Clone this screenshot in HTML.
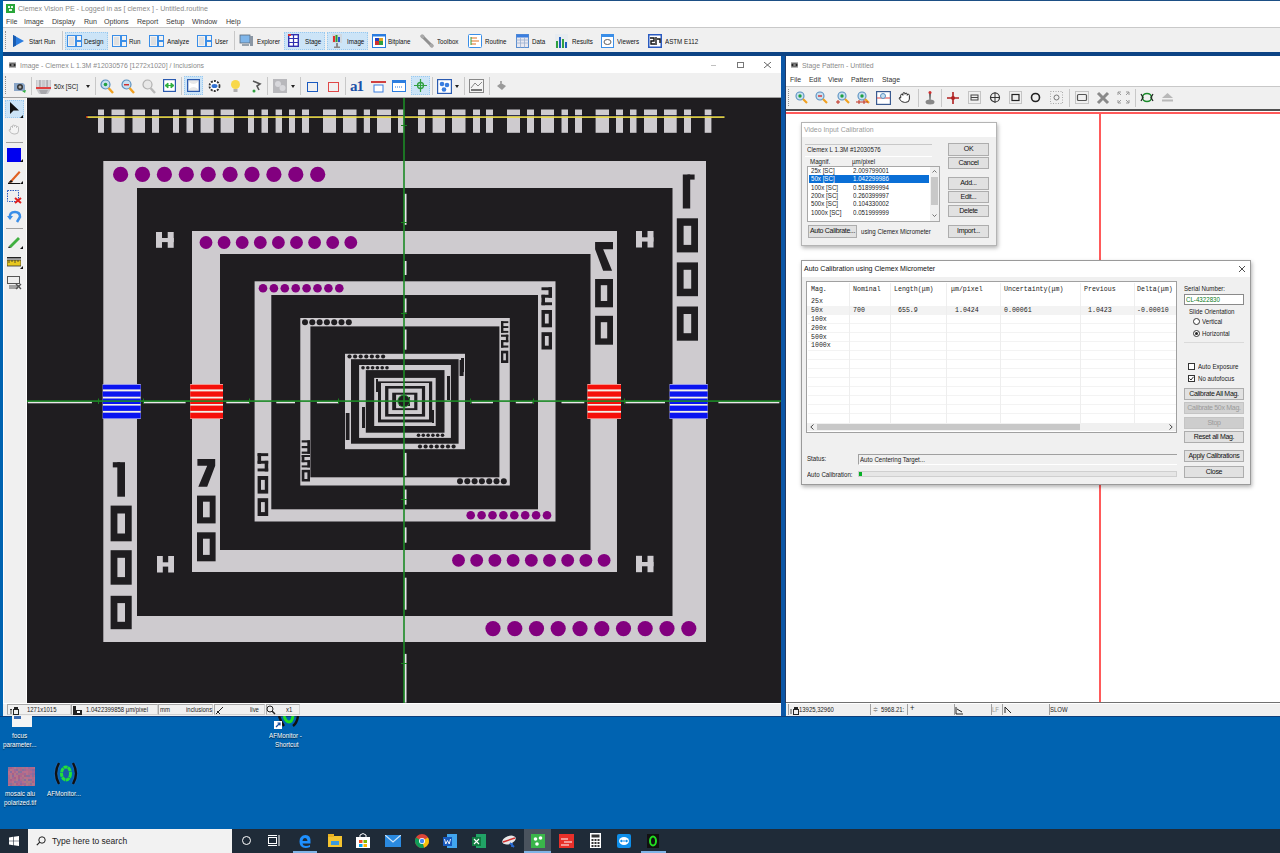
<!DOCTYPE html>
<html><head><meta charset="utf-8">
<style>
*{margin:0;padding:0;box-sizing:border-box}
html,body{width:1280px;height:853px;overflow:hidden;background:#0063b1;font-family:"Liberation Sans",sans-serif;font-size:8px;color:#000}
.a{position:absolute}
.t{position:absolute;white-space:nowrap;line-height:10px}
#desk{left:0;top:0;width:1280px;height:853px;background:#0063b1}
#main{left:0;top:0;width:1280px;height:56px;background:#fff;border-top:1px solid #1d4f85}
#lb{left:0;top:0;width:3px;height:717px;background:#0063b1}
#band{left:3px;top:52px;width:1277px;height:4px;background:#0c4384}
.sep{position:absolute;width:1px;background:#c8c8c8}
.tb{font-size:7.5px;color:#111;transform:scaleX(.83);transform-origin:0 0}
.st{font-size:7px;color:#222;transform:scaleX(.85);transform-origin:0 0;line-height:9px}
.sf{height:11px;border:1px solid #d0d0d0;border-top-color:#a8a8a8;border-left-color:#a8a8a8;background:#f0f0f0}
.sm{font-size:6.9px;color:#333}
.sf2{height:11px;border-left:1px solid #a0a0a0;background:#f0f0f0}
.dt{font-size:7px;color:#1a1a1a;transform:scaleX(.88);transform-origin:0 0;line-height:9px}
.btn{position:absolute;background:#e1e1e1;border:1px solid #adadad;font-size:7px;color:#111;text-align:center;line-height:10px;white-space:nowrap;overflow:hidden;letter-spacing:-0.3px}
.mo{font-family:"Liberation Mono",monospace;font-size:6.6px;color:#222;line-height:9px}
.dk{font-size:7px;color:#fff;line-height:9px;text-shadow:0 1px 1px rgba(0,0,0,.7);transform:scaleX(.9);transform-origin:0 0}
.hl{position:absolute;background:#cce4f7;border:1px dotted #99c9ef}
</style></head><body>
<div class="a" id="desk"></div>

<!-- main app window -->
<div class="a" id="main"></div>
<div class="a" style="left:0;top:27px;width:1280px;height:1px;background:#c9c9c9"></div>
<div class="a" style="left:0;top:28px;width:1280px;height:24px;background:#f0f0f0"></div>
<div class="a" id="band"></div>
<div class="a" id="lb"></div>


<!-- main title -->
<svg class="a" style="left:6px;top:4px" width="9" height="9" viewBox="0 0 9 9"><rect width="9" height="9" fill="#2aa63a"/><rect x="2" y="2" width="2" height="2" fill="#e8f8e8"/><rect x="5" y="2" width="2" height="2" fill="#e8f8e8"/><rect x="3" y="5" width="3" height="2" fill="#e8f8e8"/></svg>
<div class="t" style="left:18px;top:4px;font-size:7.1px;color:#8a8a8a" id="ttl">Clemex Vision PE - Logged in as [ clemex ] - Untitled.routine</div>
<div class="t" style="left:6px;top:17px;font-size:7.1px;color:#3a3a3a" id="m1">File</div>
<div class="t" style="left:24px;top:17px;font-size:7.1px;color:#3a3a3a">Image</div>
<div class="t" style="left:52px;top:17px;font-size:7.1px;color:#3a3a3a">Display</div>
<div class="t" style="left:84px;top:17px;font-size:7.1px;color:#3a3a3a">Run</div>
<div class="t" style="left:104px;top:17px;font-size:7.1px;color:#3a3a3a">Options</div>
<div class="t" style="left:137px;top:17px;font-size:7.1px;color:#3a3a3a">Report</div>
<div class="t" style="left:166px;top:17px;font-size:7.1px;color:#3a3a3a">Setup</div>
<div class="t" style="left:192px;top:17px;font-size:7.1px;color:#3a3a3a">Window</div>
<div class="t" style="left:226px;top:17px;font-size:7.1px;color:#3a3a3a">Help</div>
<!-- main toolbar -->
<div class="a" style="left:5px;top:31px;width:1px;height:18px;border-left:1px dotted #909090"></div>
<div class="hl" style="left:65px;top:32px;width:43px;height:18px"></div>
<div class="hl" style="left:284px;top:32px;width:41px;height:18px"></div>
<div class="hl" style="left:327px;top:32px;width:41px;height:18px"></div>
<div class="sep" style="left:62px;top:31px;height:19px"></div>
<div class="sep" style="left:234px;top:31px;height:19px"></div>
<svg class="a" style="left:12px;top:34px" width="13" height="14" viewBox="0 0 13 14"><path d="M1 1L12 7L1 13Z" fill="#2a7de0"/><path d="M1 1L4 2.5V11.5L1 13Z" fill="#1a5cb0"/></svg>
<div class="t tb" style="left:29px;top:37px">Start Run</div>
<svg class="a ic-l" style="left:67px;top:35px" width="15" height="12" viewBox="0 0 15 12"><rect x="0.5" y="0.5" width="8" height="11" fill="#f2f2f2" stroke="#3a8ee8"/><rect x="2" y="2" width="5" height="8" fill="#e0e0e0"/><rect x="9.5" y="0.5" width="5" height="5" fill="#f2f2f2" stroke="#3a8ee8"/><rect x="9.5" y="6.5" width="5" height="5" fill="#f2f2f2" stroke="#3a8ee8"/></svg>
<div class="t tb" style="left:84px;top:37px">Design</div>
<svg class="a" style="left:112px;top:35px" width="15" height="12" viewBox="0 0 15 12"><rect x="0.5" y="0.5" width="8" height="11" fill="#f2f2f2" stroke="#3a8ee8"/><rect x="2" y="2" width="5" height="8" fill="#e0e0e0"/><rect x="9.5" y="0.5" width="5" height="5" fill="#f2f2f2" stroke="#3a8ee8"/><rect x="9.5" y="6.5" width="5" height="5" fill="#f2f2f2" stroke="#3a8ee8"/></svg>
<div class="t tb" style="left:129px;top:37px">Run</div>
<svg class="a" style="left:149px;top:35px" width="15" height="12" viewBox="0 0 15 12"><rect x="0.5" y="0.5" width="8" height="11" fill="#f2f2f2" stroke="#3a8ee8"/><rect x="2" y="2" width="5" height="8" fill="#e0e0e0"/><rect x="9.5" y="0.5" width="5" height="5" fill="#f2f2f2" stroke="#3a8ee8"/><rect x="9.5" y="6.5" width="5" height="5" fill="#f2f2f2" stroke="#3a8ee8"/></svg>
<div class="t tb" style="left:167px;top:37px">Analyze</div>
<svg class="a" style="left:197px;top:35px" width="15" height="12" viewBox="0 0 15 12"><rect x="0.5" y="0.5" width="8" height="11" fill="#f2f2f2" stroke="#3a8ee8"/><rect x="2" y="2" width="5" height="8" fill="#e0e0e0"/><rect x="9.5" y="0.5" width="5" height="5" fill="#f2f2f2" stroke="#3a8ee8"/><rect x="9.5" y="6.5" width="5" height="5" fill="#f2f2f2" stroke="#3a8ee8"/></svg>
<div class="t tb" style="left:215px;top:37px">User</div>
<svg class="a" style="left:239px;top:34px" width="15" height="14" viewBox="0 0 15 14"><rect x="1" y="1" width="10" height="8" fill="#7fb6ea" stroke="#5a6a7a" stroke-width="0.8"/><rect x="11" y="2" width="3" height="10" fill="#8a96a4"/><rect x="3" y="10" width="7" height="2" fill="#9aa4ae"/></svg>
<div class="t tb" style="left:257px;top:37px">Explorer</div>
<svg class="a" style="left:288px;top:34px" width="11" height="13" viewBox="0 0 11 13"><rect x="0.7" y="0.7" width="9.6" height="11.6" fill="#fff" stroke="#3030b0" stroke-width="1.4"/><path d="M0.7 4.5H10.3M0.7 8.5H10.3M5.5 0.7V12.3" stroke="#3030b0" stroke-width="1.2"/><rect x="0" y="0" width="3" height="2" fill="#e03030"/></svg>
<div class="t tb" style="left:305px;top:37px">Stage</div>
<svg class="a" style="left:331px;top:34px" width="12" height="14" viewBox="0 0 12 14"><rect x="1" y="0" width="10" height="9" fill="#d0d8e0"/><rect x="2" y="2" width="2" height="6" fill="#e03030"/><rect x="4.5" y="1" width="2" height="7" fill="#30a030"/><rect x="7" y="3" width="2" height="5" fill="#3050d0"/><rect x="5" y="9" width="2" height="4" fill="#888"/><rect x="3" y="12.5" width="6" height="1.5" fill="#888"/></svg>
<div class="t tb" style="left:347px;top:37px">Image</div>
<svg class="a" style="left:372px;top:34px" width="14" height="14" viewBox="0 0 14 14"><rect x="0.5" y="0.5" width="13" height="13" fill="#fff" stroke="#2a7de0"/><rect x="3" y="4" width="8" height="7" fill="#e0a020"/><rect x="3" y="4" width="4" height="3" fill="#2040c0"/><rect x="7" y="7" width="4" height="4" fill="#30a040"/><rect x="3" y="7" width="4" height="4" fill="#d03030"/><rect x="0.5" y="0.5" width="13" height="2" fill="#2a7de0"/></svg>
<div class="t tb" style="left:388px;top:37px">Bitplane</div>
<svg class="a" style="left:420px;top:34px" width="14" height="14" viewBox="0 0 14 14"><path d="M2 2L12 12" stroke="#909090" stroke-width="3" stroke-linecap="round"/><circle cx="2.5" cy="2.5" r="2" fill="#a8a8a8"/><circle cx="11.5" cy="11.5" r="2" fill="#a8a8a8"/></svg>
<div class="t tb" style="left:437px;top:37px">Toolbox</div>
<svg class="a" style="left:468px;top:34px" width="14" height="14" viewBox="0 0 14 14"><rect x="0.5" y="0.5" width="13" height="13" rx="1" fill="#fff" stroke="#3a8ee8"/><path d="M3 4H9M3 7H11M3 10H8" stroke="#e07020" stroke-width="1.2"/><path d="M3 3V11" stroke="#30a040"/></svg>
<div class="t tb" style="left:485px;top:37px">Routine</div>
<svg class="a" style="left:516px;top:34px" width="13" height="14" viewBox="0 0 13 14"><rect x="0.5" y="0.5" width="12" height="13" fill="#e8e8f0" stroke="#5a8ed0"/><rect x="0.5" y="0.5" width="12" height="3" fill="#3a7ee0"/><path d="M0.5 6H12.5M0.5 9H12.5M4.5 3V13.5M8.5 3V13.5" stroke="#9ab0d0" stroke-width="0.8"/></svg>
<div class="t tb" style="left:532px;top:37px">Data</div>
<svg class="a" style="left:555px;top:34px" width="13" height="14" viewBox="0 0 13 14"><rect x="0" y="0" width="13" height="14" fill="#e8ecf0"/><rect x="1" y="7" width="2" height="7" fill="#30a040"/><rect x="4" y="3" width="2" height="11" fill="#2060c0"/><rect x="7" y="5" width="2" height="9" fill="#30a040"/><rect x="10" y="8" width="2" height="6" fill="#2060c0"/></svg>
<div class="t tb" style="left:572px;top:37px">Results</div>
<svg class="a" style="left:601px;top:34px" width="13" height="14" viewBox="0 0 13 14"><rect x="0.5" y="0.5" width="12" height="13" fill="#fff" stroke="#3a8ee8"/><rect x="0.5" y="0.5" width="12" height="2.5" fill="#3a8ee8"/><ellipse cx="6.5" cy="8" rx="3.5" ry="2.5" fill="none" stroke="#606060"/></svg>
<div class="t tb" style="left:617px;top:37px">Viewers</div>
<svg class="a" style="left:648px;top:34px" width="14" height="14" viewBox="0 0 14 14"><rect x="0" y="0" width="14" height="14" fill="#2a5ac0"/><rect x="1.5" y="1.5" width="11" height="11" fill="#fff"/><path d="M2 4H6V7H3V10H7M8 3V11M9 5H12V9" stroke="#111" stroke-width="1.4" fill="none"/></svg>
<div class="t tb" style="left:665px;top:37px">ASTM E112</div>

<!-- image window -->
<div class="a" id="imgwin" style="left:3px;top:56px;width:778px;height:661px;background:#fff"></div>
<div class="a" style="left:3px;top:73px;width:778px;height:24px;background:#f0f0f0"></div>
<div class="a" style="left:3px;top:97px;width:778px;height:1px;background:#a0a0a0"></div>
<div class="a" style="left:4px;top:98px;width:22px;height:605px;background:#f0f0f0"></div>
<div class="a" style="left:26px;top:98px;width:1px;height:605px;background:#fff"></div>
<svg class="a" style="left:27px;top:98px" width="754" height="605" viewBox="27 98 754 605" shape-rendering="geometricPrecision"><rect x="27.0" y="98.0" width="754.0" height="605.0" fill="#1f1d20"/><rect x="98.0" y="109.5" width="6.0" height="23.3" fill="#cecbcf"/><rect x="111.5" y="109.5" width="13.2" height="23.3" fill="#cecbcf"/><rect x="132.5" y="109.5" width="12.5" height="23.3" fill="#cecbcf"/><rect x="152.0" y="109.5" width="7.0" height="23.3" fill="#cecbcf"/><rect x="173.0" y="109.5" width="6.0" height="23.3" fill="#cecbcf"/><rect x="186.5" y="109.5" width="6.5" height="23.3" fill="#cecbcf"/><rect x="200.6" y="109.5" width="13.2" height="23.3" fill="#cecbcf"/><rect x="220.6" y="109.5" width="13.4" height="23.3" fill="#cecbcf"/><rect x="248.0" y="109.5" width="6.0" height="23.3" fill="#cecbcf"/><rect x="261.5" y="109.5" width="6.5" height="23.3" fill="#cecbcf"/><rect x="275.6" y="109.5" width="6.4" height="23.3" fill="#cecbcf"/><rect x="289.0" y="109.5" width="6.0" height="23.3" fill="#cecbcf"/><rect x="302.0" y="109.5" width="7.0" height="23.3" fill="#cecbcf"/><rect x="323.0" y="109.5" width="13.0" height="23.3" fill="#cecbcf"/><rect x="343.0" y="109.5" width="13.5" height="23.3" fill="#cecbcf"/><rect x="363.8" y="109.5" width="6.2" height="23.3" fill="#cecbcf"/><rect x="377.0" y="109.5" width="14.0" height="23.3" fill="#cecbcf"/><rect x="398.0" y="109.5" width="5.8" height="23.3" fill="#cecbcf"/><rect x="418.0" y="109.5" width="7.0" height="23.3" fill="#cecbcf"/><rect x="432.6" y="109.5" width="12.4" height="23.3" fill="#cecbcf"/><rect x="452.0" y="109.5" width="13.5" height="23.3" fill="#cecbcf"/><rect x="473.0" y="109.5" width="7.0" height="23.3" fill="#cecbcf"/><rect x="486.0" y="109.5" width="7.0" height="23.3" fill="#cecbcf"/><rect x="507.0" y="109.5" width="13.0" height="23.3" fill="#cecbcf"/><rect x="527.0" y="109.5" width="7.0" height="23.3" fill="#cecbcf"/><rect x="541.0" y="109.5" width="13.0" height="23.3" fill="#cecbcf"/><rect x="561.5" y="109.5" width="6.5" height="23.3" fill="#cecbcf"/><rect x="575.0" y="109.5" width="7.0" height="23.3" fill="#cecbcf"/><rect x="595.6" y="109.5" width="13.4" height="23.3" fill="#cecbcf"/><rect x="616.0" y="109.5" width="7.0" height="23.3" fill="#cecbcf"/><rect x="630.0" y="109.5" width="6.5" height="23.3" fill="#cecbcf"/><rect x="644.0" y="109.5" width="13.0" height="23.3" fill="#cecbcf"/><rect x="664.0" y="109.5" width="12.7" height="23.3" fill="#cecbcf"/><rect x="684.0" y="109.5" width="7.0" height="23.3" fill="#cecbcf"/><rect x="704.7" y="109.5" width="6.7" height="23.3" fill="#cecbcf"/><rect x="103.3" y="161.0" width="602.7" height="481.0" fill="#cecbcf"/><rect x="137.0" y="188.0" width="535.5" height="428.0" fill="#1f1d20"/><rect x="192.0" y="231.0" width="425.0" height="341.0" fill="#cecbcf"/><rect x="220.0" y="254.0" width="370.5" height="296.0" fill="#1f1d20"/><rect x="254.6" y="281.3" width="300.9" height="240.2" fill="#cecbcf"/><rect x="271.3" y="295.0" width="266.7" height="214.3" fill="#1f1d20"/><rect x="300.3" y="318.0" width="209.5" height="167.5" fill="#cecbcf"/><rect x="310.4" y="326.4" width="189.0" height="150.9" fill="#1f1d20"/><rect x="345.0" y="353.8" width="120.0" height="95.4" fill="#cecbcf"/><rect x="351.0" y="359.2" width="107.6" height="84.5" fill="#1f1d20"/><rect x="359.1" y="365.0" width="91.8" height="72.9" fill="#cecbcf"/><rect x="365.8" y="370.1" width="78.7" height="62.6" fill="#1f1d20"/><rect x="374.2" y="377.9" width="61.5" height="48.1" fill="#cecbcf"/><rect x="378.0" y="381.4" width="54.2" height="41.0" fill="#1f1d20"/><rect x="381.0" y="383.0" width="48.0" height="36.5" fill="#cecbcf"/><rect x="385.1" y="386.0" width="40.0" height="30.6" fill="#1f1d20"/><rect x="388.4" y="388.6" width="33.5" height="25.4" fill="#cecbcf"/><rect x="392.2" y="392.7" width="25.2" height="17.4" fill="#1f1d20"/><rect x="396.1" y="394.7" width="18.1" height="13.5" fill="#cecbcf"/><rect x="399.0" y="397.0" width="11.0" height="9.0" fill="#1f1d20"/><circle cx="120.6" cy="174.4" r="7.6" fill="#82007f"/><circle cx="142.5" cy="174.4" r="7.6" fill="#82007f"/><circle cx="164.4" cy="174.4" r="7.6" fill="#82007f"/><circle cx="186.3" cy="174.4" r="7.6" fill="#82007f"/><circle cx="208.2" cy="174.4" r="7.6" fill="#82007f"/><circle cx="230.1" cy="174.4" r="7.6" fill="#82007f"/><circle cx="252.0" cy="174.4" r="7.6" fill="#82007f"/><circle cx="273.9" cy="174.4" r="7.6" fill="#82007f"/><circle cx="295.8" cy="174.4" r="7.6" fill="#82007f"/><circle cx="317.7" cy="174.4" r="7.6" fill="#82007f"/><circle cx="493.0" cy="628.6" r="7.6" fill="#82007f"/><circle cx="514.8" cy="628.6" r="7.6" fill="#82007f"/><circle cx="536.5" cy="628.6" r="7.6" fill="#82007f"/><circle cx="558.2" cy="628.6" r="7.6" fill="#82007f"/><circle cx="580.0" cy="628.6" r="7.6" fill="#82007f"/><circle cx="601.8" cy="628.6" r="7.6" fill="#82007f"/><circle cx="623.5" cy="628.6" r="7.6" fill="#82007f"/><circle cx="645.2" cy="628.6" r="7.6" fill="#82007f"/><circle cx="667.0" cy="628.6" r="7.6" fill="#82007f"/><circle cx="688.8" cy="628.6" r="7.6" fill="#82007f"/><circle cx="206.0" cy="242.5" r="6.4" fill="#82007f"/><circle cx="224.1" cy="242.5" r="6.4" fill="#82007f"/><circle cx="242.2" cy="242.5" r="6.4" fill="#82007f"/><circle cx="260.3" cy="242.5" r="6.4" fill="#82007f"/><circle cx="278.4" cy="242.5" r="6.4" fill="#82007f"/><circle cx="296.5" cy="242.5" r="6.4" fill="#82007f"/><circle cx="314.6" cy="242.5" r="6.4" fill="#82007f"/><circle cx="332.7" cy="242.5" r="6.4" fill="#82007f"/><circle cx="350.8" cy="242.5" r="6.4" fill="#82007f"/><circle cx="458.5" cy="560.3" r="6.4" fill="#82007f"/><circle cx="476.7" cy="560.3" r="6.4" fill="#82007f"/><circle cx="494.9" cy="560.3" r="6.4" fill="#82007f"/><circle cx="513.1" cy="560.3" r="6.4" fill="#82007f"/><circle cx="531.3" cy="560.3" r="6.4" fill="#82007f"/><circle cx="549.5" cy="560.3" r="6.4" fill="#82007f"/><circle cx="567.7" cy="560.3" r="6.4" fill="#82007f"/><circle cx="585.9" cy="560.3" r="6.4" fill="#82007f"/><circle cx="604.1" cy="560.3" r="6.4" fill="#82007f"/><circle cx="263.0" cy="288.2" r="4.3" fill="#82007f"/><circle cx="273.9" cy="288.2" r="4.3" fill="#82007f"/><circle cx="284.8" cy="288.2" r="4.3" fill="#82007f"/><circle cx="295.7" cy="288.2" r="4.3" fill="#82007f"/><circle cx="306.6" cy="288.2" r="4.3" fill="#82007f"/><circle cx="317.5" cy="288.2" r="4.3" fill="#82007f"/><circle cx="328.4" cy="288.2" r="4.3" fill="#82007f"/><circle cx="339.3" cy="288.2" r="4.3" fill="#82007f"/><circle cx="470.7" cy="515.2" r="4.3" fill="#82007f"/><circle cx="481.6" cy="515.2" r="4.3" fill="#82007f"/><circle cx="492.5" cy="515.2" r="4.3" fill="#82007f"/><circle cx="503.4" cy="515.2" r="4.3" fill="#82007f"/><circle cx="514.3" cy="515.2" r="4.3" fill="#82007f"/><circle cx="525.2" cy="515.2" r="4.3" fill="#82007f"/><circle cx="536.1" cy="515.2" r="4.3" fill="#82007f"/><circle cx="547.0" cy="515.2" r="4.3" fill="#82007f"/><circle cx="305.0" cy="322.2" r="3.0" fill="#1f1d20"/><circle cx="312.3" cy="322.2" r="3.0" fill="#1f1d20"/><circle cx="319.6" cy="322.2" r="3.0" fill="#1f1d20"/><circle cx="326.9" cy="322.2" r="3.0" fill="#1f1d20"/><circle cx="334.2" cy="322.2" r="3.0" fill="#1f1d20"/><circle cx="341.5" cy="322.2" r="3.0" fill="#1f1d20"/><circle cx="348.8" cy="322.2" r="3.0" fill="#1f1d20"/><circle cx="460.0" cy="481.3" r="3.0" fill="#1f1d20"/><circle cx="467.3" cy="481.3" r="3.0" fill="#1f1d20"/><circle cx="474.6" cy="481.3" r="3.0" fill="#1f1d20"/><circle cx="481.9" cy="481.3" r="3.0" fill="#1f1d20"/><circle cx="489.2" cy="481.3" r="3.0" fill="#1f1d20"/><circle cx="496.5" cy="481.3" r="3.0" fill="#1f1d20"/><circle cx="503.8" cy="481.3" r="3.0" fill="#1f1d20"/><rect x="156.0" y="232.0" width="6.0" height="15.8" fill="#cecbcf"/><rect x="167.7" y="232.0" width="6.0" height="15.8" fill="#cecbcf"/><rect x="156.0" y="238.0" width="17.8" height="4.1" fill="#cecbcf"/><rect x="636.0" y="231.0" width="6.0" height="16.5" fill="#cecbcf"/><rect x="647.5" y="231.0" width="6.0" height="16.5" fill="#cecbcf"/><rect x="636.0" y="237.3" width="17.5" height="4.3" fill="#cecbcf"/><rect x="157.0" y="556.0" width="5.8" height="16.5" fill="#cecbcf"/><rect x="168.2" y="556.0" width="5.8" height="16.5" fill="#cecbcf"/><rect x="157.0" y="562.3" width="17.0" height="4.3" fill="#cecbcf"/><rect x="636.0" y="555.8" width="6.0" height="16.4" fill="#cecbcf"/><rect x="647.5" y="555.8" width="6.0" height="16.4" fill="#cecbcf"/><rect x="636.0" y="562.0" width="17.5" height="4.3" fill="#cecbcf"/><rect x="117.3" y="462.2" width="7.7" height="34.5" fill="#1f1d20"/><rect x="112.8" y="462.2" width="7.3" height="5.2" fill="#1f1d20"/><rect x="110.6" y="505.6" width="21.1" height="35.7" fill="#1f1d20"/><rect x="117.4" y="513.5" width="7.6" height="20.0" fill="#cecbcf"/><rect x="110.6" y="550.2" width="21.1" height="34.5" fill="#1f1d20"/><rect x="117.4" y="557.8" width="7.6" height="19.3" fill="#cecbcf"/><rect x="110.6" y="595.8" width="21.1" height="33.4" fill="#1f1d20"/><rect x="117.4" y="603.1" width="7.6" height="18.7" fill="#cecbcf"/><rect x="682.8" y="174.5" width="7.4" height="34.0" fill="#1f1d20"/><rect x="687.5" y="174.5" width="7.1" height="5.1" fill="#1f1d20"/><rect x="676.8" y="218.3" width="21.2" height="34.1" fill="#1f1d20"/><rect x="683.6" y="225.8" width="7.6" height="19.1" fill="#cecbcf"/><rect x="676.8" y="262.4" width="21.2" height="33.8" fill="#1f1d20"/><rect x="683.6" y="269.8" width="7.6" height="18.9" fill="#cecbcf"/><rect x="676.8" y="306.5" width="21.2" height="34.2" fill="#1f1d20"/><rect x="683.6" y="314.0" width="7.6" height="19.2" fill="#cecbcf"/><path d="M197.4,458.9H215.2V465.84999999999997L207.19,486.7H198.29L207.19,465.84999999999997H197.4Z" fill="#1f1d20" /><rect x="197.0" y="495.6" width="18.6" height="27.8" fill="#1f1d20"/><rect x="203.0" y="501.7" width="6.7" height="15.6" fill="#cecbcf"/><rect x="197.0" y="532.3" width="18.6" height="29.0" fill="#1f1d20"/><rect x="203.0" y="538.7" width="6.7" height="16.2" fill="#cecbcf"/><path d="M613,241.9H595.1V249.125L603.155,270.8H612.105L603.155,249.125H613Z" fill="#1f1d20" /><rect x="595.1" y="279.0" width="17.9" height="28.3" fill="#1f1d20"/><rect x="600.8" y="285.2" width="6.4" height="15.8" fill="#cecbcf"/><rect x="595.1" y="315.8" width="17.9" height="28.9" fill="#1f1d20"/><rect x="600.8" y="322.2" width="6.4" height="16.2" fill="#cecbcf"/><rect x="257.6" y="453.2" width="10.6" height="2.9" fill="#1f1d20"/><rect x="257.6" y="453.2" width="3.5" height="10.6" fill="#1f1d20"/><rect x="257.6" y="460.8" width="10.6" height="2.9" fill="#1f1d20"/><rect x="264.7" y="460.8" width="3.5" height="10.6" fill="#1f1d20"/><rect x="257.6" y="468.5" width="10.6" height="2.9" fill="#1f1d20"/><rect x="257.6" y="476.0" width="10.6" height="17.6" fill="#1f1d20"/><rect x="261.0" y="479.9" width="3.8" height="9.9" fill="#cecbcf"/><rect x="257.6" y="498.2" width="10.6" height="17.8" fill="#1f1d20"/><rect x="261.0" y="502.1" width="3.8" height="10.0" fill="#cecbcf"/><rect x="541.5" y="287.3" width="10.5" height="2.9" fill="#1f1d20"/><rect x="548.5" y="287.3" width="3.5" height="10.4" fill="#1f1d20"/><rect x="541.5" y="294.8" width="10.5" height="2.9" fill="#1f1d20"/><rect x="541.5" y="294.8" width="3.5" height="10.4" fill="#1f1d20"/><rect x="541.5" y="302.3" width="10.5" height="2.9" fill="#1f1d20"/><rect x="541.5" y="310.0" width="10.5" height="17.3" fill="#1f1d20"/><rect x="544.9" y="313.8" width="3.8" height="9.7" fill="#cecbcf"/><rect x="541.5" y="332.2" width="10.5" height="17.3" fill="#1f1d20"/><rect x="544.9" y="336.0" width="3.8" height="9.7" fill="#cecbcf"/><rect x="301.7" y="440.3" width="8.3" height="2.2" fill="#1f1d20"/><rect x="307.3" y="440.3" width="2.7" height="7.8" fill="#1f1d20"/><rect x="301.7" y="446.0" width="8.3" height="2.2" fill="#1f1d20"/><rect x="307.3" y="446.0" width="2.7" height="7.8" fill="#1f1d20"/><rect x="301.7" y="451.6" width="8.3" height="2.2" fill="#1f1d20"/><rect x="301.7" y="455.0" width="8.3" height="2.0" fill="#1f1d20"/><rect x="301.7" y="455.0" width="2.7" height="7.2" fill="#1f1d20"/><rect x="301.7" y="460.2" width="8.3" height="2.0" fill="#1f1d20"/><rect x="307.3" y="460.2" width="2.7" height="7.2" fill="#1f1d20"/><rect x="301.7" y="465.4" width="8.3" height="2.0" fill="#1f1d20"/><rect x="301.7" y="469.8" width="8.3" height="11.7" fill="#1f1d20"/><rect x="304.4" y="472.4" width="3.0" height="6.6" fill="#cecbcf"/><rect x="501.0" y="321.2" width="7.3" height="1.9" fill="#1f1d20"/><rect x="501.0" y="321.2" width="2.4" height="6.7" fill="#1f1d20"/><rect x="501.0" y="326.1" width="7.3" height="1.9" fill="#1f1d20"/><rect x="501.0" y="326.1" width="2.4" height="6.7" fill="#1f1d20"/><rect x="501.0" y="330.9" width="7.3" height="1.9" fill="#1f1d20"/><rect x="501.0" y="334.7" width="7.3" height="2.1" fill="#1f1d20"/><rect x="505.9" y="334.7" width="2.4" height="7.5" fill="#1f1d20"/><rect x="501.0" y="340.1" width="7.3" height="2.1" fill="#1f1d20"/><rect x="501.0" y="340.1" width="2.4" height="7.5" fill="#1f1d20"/><rect x="501.0" y="345.5" width="7.3" height="2.1" fill="#1f1d20"/><rect x="501.0" y="350.7" width="7.3" height="12.3" fill="#1f1d20"/><rect x="503.3" y="353.4" width="2.6" height="6.9" fill="#cecbcf"/><circle cx="349.5" cy="356.5" r="2.1" fill="#1f1d20"/><circle cx="355.1" cy="356.5" r="2.1" fill="#1f1d20"/><circle cx="360.7" cy="356.5" r="2.1" fill="#1f1d20"/><circle cx="366.3" cy="356.5" r="2.1" fill="#1f1d20"/><circle cx="371.9" cy="356.5" r="2.1" fill="#1f1d20"/><circle cx="377.5" cy="356.5" r="2.1" fill="#1f1d20"/><circle cx="383.1" cy="356.5" r="2.1" fill="#1f1d20"/><circle cx="420.0" cy="446.5" r="2.1" fill="#1f1d20"/><circle cx="425.6" cy="446.5" r="2.1" fill="#1f1d20"/><circle cx="431.2" cy="446.5" r="2.1" fill="#1f1d20"/><circle cx="436.8" cy="446.5" r="2.1" fill="#1f1d20"/><circle cx="442.4" cy="446.5" r="2.1" fill="#1f1d20"/><circle cx="448.0" cy="446.5" r="2.1" fill="#1f1d20"/><circle cx="453.6" cy="446.5" r="2.1" fill="#1f1d20"/><circle cx="363.0" cy="367.7" r="1.8" fill="#1f1d20"/><circle cx="367.8" cy="367.7" r="1.8" fill="#1f1d20"/><circle cx="372.6" cy="367.7" r="1.8" fill="#1f1d20"/><circle cx="377.4" cy="367.7" r="1.8" fill="#1f1d20"/><circle cx="382.2" cy="367.7" r="1.8" fill="#1f1d20"/><circle cx="387.0" cy="367.7" r="1.8" fill="#1f1d20"/><circle cx="418.5" cy="435.3" r="1.8" fill="#1f1d20"/><circle cx="423.3" cy="435.3" r="1.8" fill="#1f1d20"/><circle cx="428.1" cy="435.3" r="1.8" fill="#1f1d20"/><circle cx="432.9" cy="435.3" r="1.8" fill="#1f1d20"/><circle cx="437.7" cy="435.3" r="1.8" fill="#1f1d20"/><circle cx="442.5" cy="435.3" r="1.8" fill="#1f1d20"/><rect x="461.0" y="358.0" width="3.0" height="14.0" fill="#1f1d20"/><rect x="459.6" y="360.0" width="4.0" height="16.0" fill="#1f1d20"/><rect x="447.0" y="376.0" width="3.0" height="24.0" fill="#1f1d20"/><rect x="345.8" y="413.0" width="3.7" height="27.0" fill="#1f1d20"/><rect x="362.0" y="407.0" width="3.0" height="21.0" fill="#1f1d20"/><rect x="376.0" y="379.0" width="2.0" height="13.0" fill="#1f1d20"/><rect x="432.0" y="410.0" width="2.0" height="13.0" fill="#1f1d20"/><circle cx="403.8" cy="401.1" r="6.0" fill="#1f1d20"/><circle cx="403.8" cy="401.1" r="6" fill="none" stroke="#1c9a2a" stroke-width="0.9"/><rect x="404.3" y="193.8" width="2.2" height="31.0" fill="#e8e6e8"/><rect x="404.3" y="261.0" width="2.2" height="14.0" fill="#e8e6e8"/><rect x="404.3" y="298.4" width="2.2" height="14.0" fill="#e8e6e8"/><rect x="404.3" y="329.5" width="2.2" height="20.2" fill="#e8e6e8"/><rect x="404.3" y="452.9" width="2.2" height="22.9" fill="#e8e6e8"/><rect x="404.3" y="489.5" width="2.2" height="15.2" fill="#e8e6e8"/><rect x="404.3" y="527.4" width="2.2" height="15.3" fill="#e8e6e8"/><rect x="404.3" y="577.7" width="2.2" height="32.0" fill="#e8e6e8"/><rect x="404.3" y="653.9" width="2.2" height="48.7" fill="#e8e6e8"/><rect x="27.8" y="401.3" width="64.1" height="2.0" fill="#e8e6e8"/><rect x="143.4" y="401.3" width="42.2" height="2.0" fill="#e8e6e8"/><rect x="226.3" y="401.3" width="23.4" height="2.0" fill="#e8e6e8"/><rect x="276.3" y="401.3" width="18.7" height="2.0" fill="#e8e6e8"/><rect x="316.9" y="401.3" width="21.9" height="2.0" fill="#e8e6e8"/><rect x="471.6" y="401.3" width="21.4" height="2.0" fill="#e8e6e8"/><rect x="515.8" y="401.3" width="16.7" height="2.0" fill="#e8e6e8"/><rect x="561.5" y="401.3" width="22.8" height="2.0" fill="#e8e6e8"/><rect x="625.5" y="401.3" width="39.5" height="2.0" fill="#e8e6e8"/><rect x="718.4" y="401.3" width="60.9" height="2.0" fill="#e8e6e8"/><rect x="102.7" y="384.0" width="38.0" height="35.0" fill="#f4f0e8"/><rect x="102.7" y="384.6" width="38.0" height="4.8" fill="#0a14f0"/><rect x="102.7" y="391.4" width="38.0" height="5.3" fill="#0a14f0"/><rect x="102.7" y="398.5" width="38.0" height="5.5" fill="#0a14f0"/><rect x="102.7" y="405.6" width="38.0" height="5.3" fill="#0a14f0"/><rect x="102.7" y="412.7" width="38.0" height="5.8" fill="#0a14f0"/><rect x="190.2" y="384.0" width="32.8" height="35.0" fill="#f4f0e8"/><rect x="190.2" y="384.6" width="32.8" height="4.8" fill="#f5100a"/><rect x="190.2" y="391.4" width="32.8" height="5.3" fill="#f5100a"/><rect x="190.2" y="398.5" width="32.8" height="5.5" fill="#f5100a"/><rect x="190.2" y="405.6" width="32.8" height="5.3" fill="#f5100a"/><rect x="190.2" y="412.7" width="32.8" height="5.8" fill="#f5100a"/><rect x="587.4" y="384.0" width="33.6" height="35.0" fill="#f4f0e8"/><rect x="587.4" y="384.6" width="33.6" height="4.8" fill="#f5100a"/><rect x="587.4" y="391.4" width="33.6" height="5.3" fill="#f5100a"/><rect x="587.4" y="398.5" width="33.6" height="5.5" fill="#f5100a"/><rect x="587.4" y="405.6" width="33.6" height="5.3" fill="#f5100a"/><rect x="587.4" y="412.7" width="33.6" height="5.8" fill="#f5100a"/><rect x="669.6" y="384.0" width="38.1" height="35.0" fill="#f4f0e8"/><rect x="669.6" y="384.6" width="38.1" height="4.8" fill="#0a14f0"/><rect x="669.6" y="391.4" width="38.1" height="5.3" fill="#0a14f0"/><rect x="669.6" y="398.5" width="38.1" height="5.5" fill="#0a14f0"/><rect x="669.6" y="405.6" width="38.1" height="5.3" fill="#0a14f0"/><rect x="669.6" y="412.7" width="38.1" height="5.8" fill="#0a14f0"/><rect x="86.0" y="115.2" width="638.5" height="1.2" fill="#0a0c30"/><rect x="86.0" y="116.3" width="638.5" height="1.6" fill="#ecdc48"/><rect x="86.0" y="116.0" width="1.5" height="2.0" fill="#c03010"/><rect x="403.2" y="98.0" width="1.6" height="605.0" fill="#1c8a26"/><rect x="27.0" y="400.3" width="754.0" height="1.6" fill="#1c8a26"/><rect x="401.0" y="125.0" width="6.0" height="1.0" fill="#1a7f1f"/><rect x="401.0" y="222.0" width="6.0" height="1.0" fill="#1a7f1f"/><rect x="401.0" y="313.0" width="6.0" height="1.0" fill="#1a7f1f"/><rect x="401.0" y="499.0" width="6.0" height="1.0" fill="#1a7f1f"/><rect x="401.0" y="663.0" width="6.0" height="1.0" fill="#1a7f1f"/><rect x="98.0" y="398.5" width="1.0" height="5.5" fill="#1a7f1f"/><rect x="143.0" y="398.5" width="1.0" height="5.5" fill="#1a7f1f"/><rect x="249.0" y="398.5" width="1.0" height="5.5" fill="#1a7f1f"/><rect x="338.0" y="398.5" width="1.0" height="5.5" fill="#1a7f1f"/><rect x="470.0" y="398.5" width="1.0" height="5.5" fill="#1a7f1f"/><rect x="533.0" y="398.5" width="1.0" height="5.5" fill="#1a7f1f"/><rect x="624.0" y="398.5" width="1.0" height="5.5" fill="#1a7f1f"/></svg>
<div class="a" style="left:3px;top:703px;width:778px;height:13px;background:#f0f0f0"></div>


<!-- image window header -->
<svg class="a" style="left:9px;top:62px" width="7" height="6" viewBox="0 0 7 6"><rect x="0" y="0" width="7" height="6" fill="#b8b8b8"/><rect x="0.5" y="1.5" width="6" height="3" fill="#222"/><ellipse cx="3.5" cy="3" rx="1.5" ry="1" fill="#888"/></svg>
<div class="t" style="left:20px;top:61px;font-size:6.9px;color:#8a8a8a">Image - Clemex L 1.3M #12030576 [1272x1020] / Inclusions</div>
<div class="a" style="left:711px;top:65px;width:5px;height:1px;background:#c0c0c0"></div>
<div class="a" style="left:737px;top:62px;width:7px;height:6px;border:1px solid #777"></div>
<svg class="a" style="left:764px;top:62px" width="7" height="6" viewBox="0 0 7 6"><path d="M0 0L7 6M7 0L0 6" stroke="#555" stroke-width="0.9"/></svg>
<!-- image toolbar -->
<div class="a" style="left:5px;top:76px;width:1px;height:18px;border-left:1px dotted #909090"></div>
<svg class="a" style="left:12px;top:79px" width="15" height="15" viewBox="0 0 15 15"><path d="M2 4H11L13 6V12H2Z" fill="#8aa6c8"/><circle cx="8" cy="8" r="3" fill="#333"/><circle cx="8" cy="8" r="1.5" fill="#aaa"/><path d="M10 12L13 14L14 11Z" fill="#30b040"/></svg>
<div class="sep" style="left:31px;top:77px;height:18px"></div>
<svg class="a" style="left:36px;top:80px" width="15" height="15" viewBox="0 0 15 15"><path d="M0 0H15V9L12 14H3L0 9Z" fill="#c8c8cc"/><path d="M2 0V8M5 0V8M10 0V8M13 0V8" stroke="#e8e8ec" stroke-width="1"/><path d="M4 0V8M11 0V8" stroke="#8a8a90" stroke-width="0.8"/><rect x="0" y="7" width="15" height="2" fill="#e04040"/><path d="M3 10H12L10 14H5Z" fill="#a8a8ac"/></svg>
<div class="t" style="left:54px;top:82px;font-size:7.5px;color:#111;transform:scaleX(.83);transform-origin:0 0">50x [SC]</div>
<svg class="a" style="left:86px;top:85px" width="4" height="3" viewBox="0 0 4 3"><path d="M0 0H4L2 3Z" fill="#222"/></svg>
<div class="sep" style="left:95px;top:77px;height:18px"></div>
<svg class="a" style="left:100px;top:79px" width="14" height="15" viewBox="0 0 14 15"><circle cx="5.5" cy="5.5" r="4.5" fill="#c8e0f0" stroke="#5a90c0" stroke-width="1.2"/><circle cx="5.5" cy="5.5" r="1.8" fill="#20a040"/><path d="M8.5 9L13 14" stroke="#f0a020" stroke-width="2.4"/></svg>
<svg class="a" style="left:121px;top:79px" width="14" height="15" viewBox="0 0 14 15"><circle cx="5.5" cy="5.5" r="4.5" fill="#c8e0f0" stroke="#5a90c0" stroke-width="1.2"/><rect x="3" y="5" width="5" height="1.5" fill="#d03030"/><path d="M8.5 9L13 14" stroke="#f0a020" stroke-width="2.4"/></svg>
<svg class="a" style="left:142px;top:79px" width="14" height="15" viewBox="0 0 14 15"><circle cx="5.5" cy="5.5" r="4.5" fill="#e8e8e8" stroke="#b0b0b0" stroke-width="1.2"/><path d="M8.5 9L13 14" stroke="#b8b8b8" stroke-width="2.4"/></svg>
<svg class="a" style="left:163px;top:79px" width="13" height="13" viewBox="0 0 13 13"><rect x="0.6" y="0.6" width="11.8" height="11.8" fill="#fff" stroke="#2a5ab0" stroke-width="1.2"/><path d="M2 6.5H11M2 6.5L5 4V9ZM11 6.5L8 4V9Z" stroke="#30b040" fill="#30b040"/></svg>
<div class="sep" style="left:181px;top:77px;height:18px"></div>
<div class="hl" style="left:184px;top:76px;width:19px;height:19px"></div>
<svg class="a" style="left:187px;top:79px" width="13" height="13" viewBox="0 0 13 13"><rect x="0.6" y="0.6" width="11.8" height="11.8" fill="#e8e8e8" stroke="#2a5ab0" stroke-width="1.2"/><path d="M2 3Q6.5 7 11 3V10Q6.5 6 2 10Z" fill="#fff"/></svg>
<svg class="a" style="left:208px;top:79px" width="13" height="14" viewBox="0 0 13 14"><circle cx="6.5" cy="7" r="5" fill="#fff" stroke="#333" stroke-width="1.8" stroke-dasharray="2 1.2"/><ellipse cx="6.5" cy="7" rx="3" ry="2" fill="#3070d0"/></svg>
<svg class="a" style="left:230px;top:79px" width="11" height="15" viewBox="0 0 11 15"><circle cx="5.5" cy="5.5" r="4.5" fill="#f8d84a"/><rect x="3.5" y="10" width="4" height="3" fill="#b0b0b0"/></svg>
<svg class="a" style="left:251px;top:79px" width="11" height="15" viewBox="0 0 11 15"><path d="M2 2L9 5L6 7L8 11" stroke="#555" stroke-width="1.6" fill="none"/><circle cx="3" cy="12" r="1.5" fill="#30a040"/></svg>
<div class="sep" style="left:267px;top:77px;height:18px"></div>
<svg class="a" style="left:273px;top:79px" width="14" height="14" viewBox="0 0 14 14"><rect x="0" y="0" width="14" height="14" fill="#b8b8bc"/><circle cx="5" cy="5" r="3" fill="#d8d8dc"/><circle cx="9.5" cy="9" r="3" fill="#d8d8dc"/></svg>
<svg class="a" style="left:291px;top:85px" width="4" height="3" viewBox="0 0 4 3"><path d="M0 0H4L2 3Z" fill="#222"/></svg>
<div class="sep" style="left:300px;top:77px;height:18px"></div>
<div class="a" style="left:307px;top:82px;width:11px;height:10px;border:1.6px solid #1a5ac0"></div>
<div class="a" style="left:328px;top:82px;width:11px;height:10px;border:1.6px solid #e04848"></div>
<div class="sep" style="left:345px;top:77px;height:18px"></div>
<div class="t" style="left:350px;top:79px;font-size:15px;line-height:15px;font-weight:bold;color:#1a50a8;font-family:'Liberation Serif',serif;letter-spacing:-1px">a1</div>
<svg class="a" style="left:371px;top:79px" width="15" height="14" viewBox="0 0 15 14"><rect x="0" y="2" width="15" height="2" fill="#d04040"/><rect x="3" y="6" width="9" height="7" fill="#fff" stroke="#3a7ee0"/></svg>
<svg class="a" style="left:392px;top:80px" width="14" height="12" viewBox="0 0 14 12"><rect x="0.5" y="0.5" width="13" height="11" fill="#fff" stroke="#2a7de0"/><rect x="0.5" y="0.5" width="13" height="2.5" fill="#2a7de0"/><path d="M3 7H11" stroke="#2a7de0" stroke-dasharray="1 1"/></svg>
<div class="hl" style="left:411px;top:76px;width:19px;height:19px"></div>
<svg class="a" style="left:414px;top:79px" width="13" height="13" viewBox="0 0 13 13"><circle cx="6.5" cy="6.5" r="3" fill="none" stroke="#30a040" stroke-width="1.3"/><path d="M6.5 0V13M0 6.5H13" stroke="#30a040" stroke-width="1.2"/></svg>
<div class="sep" style="left:432px;top:77px;height:18px"></div>
<svg class="a" style="left:437px;top:79px" width="15" height="15" viewBox="0 0 15 15"><rect x="0.6" y="0.6" width="13.8" height="13.8" fill="#fff" stroke="#2a5ab0" stroke-width="1.2"/><circle cx="5" cy="5" r="2.3" fill="#3a7ee0"/><circle cx="10" cy="6" r="2.3" fill="#3a7ee0"/><circle cx="7" cy="10.5" r="2.3" fill="#3a7ee0"/></svg>
<svg class="a" style="left:455px;top:85px" width="4" height="3" viewBox="0 0 4 3"><path d="M0 0H4L2 3Z" fill="#222"/></svg>
<div class="sep" style="left:464px;top:77px;height:18px"></div>
<svg class="a" style="left:469px;top:79px" width="15" height="14" viewBox="0 0 15 14"><rect x="0.5" y="0.5" width="14" height="13" fill="#f4f4f4" stroke="#888"/><path d="M2 9L6 4L9 7L13 3" stroke="#888" fill="none"/><rect x="2" y="10" width="11" height="2" fill="#777"/></svg>
<div class="sep" style="left:489px;top:77px;height:18px"></div>
<svg class="a" style="left:496px;top:81px" width="11" height="10" viewBox="0 0 11 10"><path d="M1 5L5 2L10 5L6 9Z" fill="#9a9a9a"/><rect x="4" y="0" width="2" height="3" fill="#aaa"/></svg>
<!-- left tools -->
<div class="hl" style="left:5px;top:100px;width:19px;height:18px"></div>
<svg class="a" style="left:9px;top:102px" width="12" height="14" viewBox="0 0 12 14"><path d="M1 0V12L4.5 8.5L10 8.5Z" fill="#111"/></svg>
<svg class="a" style="left:8px;top:124px" width="12" height="11" viewBox="0 0 12 11"><path d="M2.5 6V3.5Q2.5 2.5 3.5 2.5T4.5 3.5V2Q4.5 1 5.5 1T6.5 2V2.5Q6.5 1.5 7.5 1.5T8.5 2.5V3.5Q8.5 2.5 9.5 2.5T10.5 3.5V7Q10.5 10 7 10H6Q3 10 1.5 7L1 6Q1 5 2.5 6Z" fill="#f4f4f4" stroke="#b0b0b0" stroke-width="0.8"/></svg>
<div class="a" style="left:6px;top:142px;width:17px;height:1px;background:#a0a0a0"></div>
<div class="a" style="left:7px;top:148px;width:14px;height:14px;background:#0000f0"></div>
<svg class="a" style="left:7px;top:169px" width="15" height="15" viewBox="0 0 15 15"><path d="M2 13L12 2L13.5 3.5L4 14Z" fill="#e06020"/><path d="M1 14L4 11L6 13Z" fill="#111"/><path d="M1 14.5H13" stroke="#111"/></svg>
<svg class="a" style="left:7px;top:190px" width="15" height="14" viewBox="0 0 15 14"><rect x="0.5" y="0.5" width="11" height="11" fill="none" stroke="#2a5ac0" stroke-dasharray="1.5 1"/><path d="M8 8L14 13M14 8L8 13" stroke="#e02020" stroke-width="2"/></svg>
<svg class="a" style="left:7px;top:210px" width="15" height="13" viewBox="0 0 15 13"><path d="M3 8Q2 2 8 2Q13 2 13 7L10 12" stroke="#3a8ee8" stroke-width="2.5" fill="none"/><path d="M0 6L3 10L6 6Z" fill="#3a8ee8"/></svg>
<div class="a" style="left:6px;top:228px;width:17px;height:1px;background:#a0a0a0"></div>
<svg class="a" style="left:7px;top:234px" width="15" height="15" viewBox="0 0 15 15"><path d="M2 12L11 3L13 5L4 14Z" fill="#40b040"/><path d="M1 14L2 12L4 14Z" fill="#333"/></svg>
<svg class="a" style="left:7px;top:257px" width="14" height="11" viewBox="0 0 14 11"><rect x="0" y="0" width="14" height="1.5" fill="#222"/><rect x="0" y="3" width="14" height="6" fill="#e8c820" stroke="#333" stroke-width="0.8"/><path d="M2 3V6M5 3V5M8 3V6M11 3V5" stroke="#333" stroke-width="0.8"/></svg>
<svg class="a" style="left:7px;top:276px" width="15" height="14" viewBox="0 0 15 14"><rect x="0.5" y="0.5" width="12" height="7" fill="#eee" stroke="#555"/><path d="M2 10H13M2 12H11" stroke="#555"/><path d="M9 8L14 13M14 8L9 13" stroke="#555" stroke-width="1.4"/></svg>
<svg class="a" style="left:20px;top:115px" width="3" height="3" viewBox="0 0 3 3"><path d="M3 0V3H0Z" fill="#111"/></svg>
<svg class="a" style="left:20px;top:159px" width="3" height="3" viewBox="0 0 3 3"><path d="M3 0V3H0Z" fill="#111"/></svg>
<svg class="a" style="left:20px;top:181px" width="3" height="3" viewBox="0 0 3 3"><path d="M3 0V3H0Z" fill="#111"/></svg>
<svg class="a" style="left:20px;top:246px" width="3" height="3" viewBox="0 0 3 3"><path d="M3 0V3H0Z" fill="#111"/></svg>
<svg class="a" style="left:20px;top:266px" width="3" height="3" viewBox="0 0 3 3"><path d="M3 0V3H0Z" fill="#111"/></svg>
<!-- image window status bar -->
<div class="a" style="left:3px;top:703px;width:778px;height:1px;background:#fff"></div>
<div class="a sf" style="left:7px;top:704px;width:64px"></div>
<div class="a sf" style="left:71px;top:704px;width:87px"></div>
<div class="a sf" style="left:158px;top:704px;width:55px"></div>
<div class="a sf" style="left:214px;top:704px;width:51px"></div>
<div class="a sf" style="left:266px;top:704px;width:34px"></div>
<svg class="a" style="left:10px;top:706px" width="9" height="9" viewBox="0 0 9 9"><path d="M1 3V8M1 3L0 4M1 3L2 4" stroke="#222" stroke-width="0.8"/><rect x="3.5" y="3.5" width="5" height="5" fill="none" stroke="#222"/><rect x="4" y="1" width="4" height="2" fill="#222"/></svg>
<div class="t st" style="left:27px;top:705px">1271x1015</div>
<svg class="a" style="left:73px;top:706px" width="9" height="9" viewBox="0 0 9 9"><rect x="0" y="0" width="3" height="9" fill="#222"/><rect x="3" y="4" width="6" height="5" fill="#222"/><rect x="4" y="5" width="3" height="2" fill="#fff"/></svg>
<div class="t st" style="left:86px;top:705px">1.0422399858 μm/pixel</div>
<div class="t st" style="left:160px;top:705px">mm</div>
<div class="t st" style="left:186px;top:705px">inclusions</div>
<svg class="a" style="left:215px;top:706px" width="9" height="9" viewBox="0 0 9 9"><path d="M1 8L8 1M2 5L5 8" stroke="#222" stroke-width="1"/></svg>
<div class="t st" style="left:250px;top:705px">live</div>
<svg class="a" style="left:266px;top:705px" width="10" height="10" viewBox="0 0 10 10"><circle cx="4" cy="4" r="3" fill="none" stroke="#222" stroke-width="1"/><path d="M6 6L9 9" stroke="#222" stroke-width="1.5"/></svg>
<div class="t st" style="left:286px;top:705px">x1</div>

<!-- blue separator between windows -->
<div class="a" style="left:781px;top:56px;width:4px;height:661px;background:#0b56a6"></div>

<!-- stage window -->
<div class="a" style="left:786px;top:56px;width:494px;height:661px;background:#fff"></div>
<div class="a" style="left:786px;top:86px;width:494px;height:1px;background:#c8c8c8"></div>
<div class="a" style="left:786px;top:87px;width:494px;height:22px;background:#f0f0f0"></div>
<div class="a" style="left:786px;top:109px;width:494px;height:2px;background:#505050"></div>
<div class="a" style="left:786px;top:112px;width:494px;height:2px;background:#ff5a5a"></div>
<div class="a" style="left:1099px;top:112px;width:2px;height:591px;background:#ff5a5a"></div>
<div class="a" style="left:786px;top:703px;width:494px;height:13px;background:#f0f0f0"></div>


<!-- stage header -->
<div class="a" style="left:785px;top:56px;width:1px;height:647px;background:#203a68"></div>
<svg class="a" style="left:791px;top:62px" width="7" height="6" viewBox="0 0 7 6"><rect x="0" y="0" width="7" height="6" fill="#b8b8b8"/><rect x="0.5" y="1.5" width="6" height="3" fill="#222"/><ellipse cx="3.5" cy="3" rx="1.5" ry="1" fill="#888"/></svg>
<div class="t" style="left:802px;top:61px;font-size:6.9px;color:#8a8a8a">Stage Pattern - Untitled</div>
<div class="t sm" style="left:790px;top:75px">File</div>
<div class="t sm" style="left:809px;top:75px">Edit</div>
<div class="t sm" style="left:828px;top:75px">View</div>
<div class="t sm" style="left:851px;top:75px">Pattern</div>
<div class="t sm" style="left:882px;top:75px">Stage</div>
<div class="a" style="left:788px;top:89px;width:1px;height:17px;border-left:1px dotted #909090"></div>
<svg class="a" style="left:795px;top:91px" width="13" height="13" viewBox="0 0 13 13"><circle cx="5" cy="5" r="4" fill="#c8e0f0" stroke="#5a90c0" stroke-width="1.1"/><circle cx="5" cy="5" r="1.7" fill="#20a040"/><path d="M8 8L12 12" stroke="#f0a020" stroke-width="2.2"/></svg>
<svg class="a" style="left:815px;top:91px" width="13" height="13" viewBox="0 0 13 13"><circle cx="5" cy="5" r="4" fill="#c8e0f0" stroke="#5a90c0" stroke-width="1.1"/><rect x="3" y="4.3" width="4" height="1.4" fill="#d03030"/><path d="M8 8L12 12" stroke="#f0a020" stroke-width="2.2"/></svg>
<svg class="a" style="left:836px;top:91px" width="14" height="14" viewBox="0 0 14 14"><circle cx="6" cy="5" r="4" fill="#c8e0f0" stroke="#5a90c0" stroke-width="1.1"/><circle cx="6" cy="5" r="1.7" fill="#20a040"/><path d="M9 8L13 12" stroke="#f0a020" stroke-width="2.2"/><path d="M0 11H4M2 9V13" stroke="#c03020"/></svg>
<svg class="a" style="left:856px;top:91px" width="14" height="14" viewBox="0 0 14 14"><circle cx="6" cy="5" r="4" fill="#c8e0f0" stroke="#5a90c0" stroke-width="1.1"/><circle cx="6" cy="5" r="1.7" fill="#20a040"/><path d="M9 8L13 12" stroke="#f0a020" stroke-width="2.2"/><path d="M0 11H12M3 9V13M8 9V13" stroke="#c03020"/></svg>
<svg class="a" style="left:876px;top:91px" width="15" height="14" viewBox="0 0 15 14"><rect x="0.6" y="0.6" width="13.8" height="12.8" fill="#fff" stroke="#3a5a90" stroke-width="1.2"/><path d="M1 7H14" stroke="#e04040"/><circle cx="7" cy="5" r="2.5" fill="#c8e0f0" stroke="#5a90c0"/></svg>
<svg class="a" style="left:898px;top:91px" width="13" height="13" viewBox="0 0 12 11"><path d="M2.5 6V3.5Q2.5 2.5 3.5 2.5T4.5 3.5V2Q4.5 1 5.5 1T6.5 2V2.5Q6.5 1.5 7.5 1.5T8.5 2.5V3.5Q8.5 2.5 9.5 2.5T10.5 3.5V7Q10.5 10 7 10H6Q3 10 1.5 7L1 6Q1 5 2.5 6Z" fill="#fff" stroke="#222" stroke-width="0.9"/></svg>
<div class="sep" style="left:918px;top:89px;height:18px"></div>
<svg class="a" style="left:925px;top:91px" width="10" height="14" viewBox="0 0 10 14"><path d="M4 1L6 1L5.5 9H4.5Z" fill="#555"/><ellipse cx="5" cy="11" rx="4.5" ry="2.5" fill="#888"/><circle cx="5" cy="1.5" r="1.5" fill="#d03030"/></svg>
<div class="sep" style="left:941px;top:89px;height:18px"></div>
<svg class="a" style="left:946px;top:91px" width="14" height="14" viewBox="0 0 14 14"><path d="M7 1V13M1 7H13" stroke="#b02020" stroke-width="1.6"/><circle cx="7" cy="7" r="2" fill="#b02020"/></svg>
<svg class="a" style="left:968px;top:91px" width="13" height="13" viewBox="0 0 13 13"><rect x="0.5" y="0.5" width="12" height="12" fill="none" stroke="#999" stroke-dasharray="1 1"/><rect x="3" y="4" width="7" height="5" fill="none" stroke="#444"/><path d="M3 6.5H10" stroke="#444"/></svg>
<svg class="a" style="left:989px;top:91px" width="12" height="13" viewBox="0 0 12 13"><circle cx="6" cy="6.5" r="4.5" fill="none" stroke="#333" stroke-width="1.2"/><path d="M6 1V12M1 6.5H11" stroke="#333"/></svg>
<svg class="a" style="left:1009px;top:91px" width="13" height="13" viewBox="0 0 13 13"><rect x="0.5" y="0.5" width="12" height="12" fill="none" stroke="#999" stroke-dasharray="1 1"/><rect x="3" y="3.5" width="7" height="6" fill="none" stroke="#222" stroke-width="1.2"/></svg>
<svg class="a" style="left:1030px;top:91px" width="11" height="13" viewBox="0 0 11 13"><circle cx="5.5" cy="6.5" r="4" fill="none" stroke="#222" stroke-width="1.6"/></svg>
<svg class="a" style="left:1050px;top:91px" width="13" height="13" viewBox="0 0 13 13"><rect x="0.5" y="0.5" width="12" height="12" fill="none" stroke="#aaa" stroke-dasharray="1 1.5"/><circle cx="6.5" cy="6.5" r="2.5" fill="none" stroke="#777"/></svg>
<div class="sep" style="left:1069px;top:89px;height:18px"></div>
<svg class="a" style="left:1075px;top:91px" width="14" height="13" viewBox="0 0 14 13"><rect x="0.5" y="0.5" width="13" height="12" fill="none" stroke="#999" stroke-dasharray="1 1"/><rect x="2.5" y="3.5" width="9" height="6" rx="1" fill="none" stroke="#555" stroke-width="1.2"/></svg>
<svg class="a" style="left:1096px;top:91px" width="14" height="14" viewBox="0 0 14 14"><path d="M2 2L12 12M12 2L2 12" stroke="#8a8a8a" stroke-width="3"/></svg>
<svg class="a" style="left:1117px;top:91px" width="13" height="13" viewBox="0 0 13 13"><path d="M1 4V1H4M9 1H12V4M12 9V12H9M4 12H1V9M1 1L4 4M12 1L9 4M12 12L9 9M1 12L4 9" stroke="#999" fill="none"/></svg>
<div class="sep" style="left:1135px;top:89px;height:18px"></div>
<svg class="a" style="left:1140px;top:92px" width="14" height="11" viewBox="0 0 14 11"><ellipse cx="7" cy="5.5" rx="4.5" ry="4" fill="none" stroke="#1a8a2a" stroke-width="1.6"/><path d="M1 2L3 5.5L1 9M13 2L11 5.5L13 9" stroke="#222" stroke-width="1.2" fill="none"/></svg>
<svg class="a" style="left:1161px;top:92px" width="13" height="11" viewBox="0 0 13 11"><path d="M6.5 1L12 6H1Z" fill="#b8b8b8"/><rect x="1" y="7.5" width="11" height="2" fill="#b8b8b8"/></svg>
<!-- stage status bar -->
<div class="a" style="left:786px;top:702px;width:494px;height:1px;background:#707070"></div>
<div class="a" style="left:786px;top:703px;width:494px;height:1px;background:#fff"></div>
<div class="a sf2" style="left:788px;top:704px;width:82px"></div>
<div class="a sf2" style="left:870px;top:704px;width:37px"></div>
<div class="a sf2" style="left:907px;top:704px;width:47px"></div>
<div class="a sf2" style="left:954px;top:704px;width:37px"></div>
<div class="a sf2" style="left:991px;top:704px;width:11px"></div>
<div class="a sf2" style="left:1002px;top:704px;width:47px"></div>
<div class="a sf2" style="left:1049px;top:704px;width:32px"></div>
<svg class="a" style="left:790px;top:706px" width="9" height="9" viewBox="0 0 9 9"><path d="M1 3V8" stroke="#222" stroke-width="0.8"/><rect x="3.5" y="3.5" width="5" height="5" fill="none" stroke="#222"/><rect x="4" y="1" width="4" height="2" fill="#222"/></svg>
<div class="t st" style="left:799px;top:705px">13925,32960</div>
<div class="t st" style="left:873px;top:705px;color:#999">≑</div>
<div class="t st" style="left:881px;top:705px">5968.21:</div>
<div class="t st" style="left:910px;top:704px;font-size:9px">+</div>
<svg class="a" style="left:955px;top:706px" width="9" height="9" viewBox="0 0 9 9"><path d="M1 1V8H8M2 3L7 6" stroke="#222" stroke-width="1" fill="none"/></svg>
<div class="t st" style="left:992px;top:705px;color:#999">LF</div>
<svg class="a" style="left:1004px;top:706px" width="8" height="8" viewBox="0 0 8 8"><path d="M1 7V1L7 7" stroke="#222" stroke-width="1" fill="none"/></svg>
<div class="t st" style="left:1050px;top:705px">SLOW</div>


<!-- Video Input Calibration dialog -->
<div class="a" style="left:801px;top:122px;width:196px;height:124px;box-shadow:1px 2px 4px rgba(0,0,0,0.3)"></div>
<div class="a" style="left:801px;top:122px;width:196px;height:124px;background:#f0f0f0;border:1px solid #b4b4b4"></div>
<div class="a" style="left:802px;top:123px;width:194px;height:14px;background:#fff"></div>
<div class="t" style="left:804px;top:125px;font-size:6.9px;color:#9a9a9a">Video Input Calibration</div>
<div class="a" style="left:805px;top:144px;width:127px;height:13px;border-top:1px solid #c8c8c8;border-bottom:1px solid #fff"></div>
<div class="t dt" style="left:807px;top:145px">Clemex L 1.3M #12030576</div>
<div class="t dt" style="left:810px;top:157px">Magnif.</div>
<div class="t dt" style="left:852px;top:157px">µm/pixel</div>
<div class="a" style="left:807px;top:166px;width:133px;height:56px;background:#fff;border:1px solid #a8a8a8"></div>
<div class="a" style="left:809px;top:175px;width:120px;height:8px;background:#0a6fd6"></div>
<div class="a" style="left:930px;top:167px;width:9px;height:54px;background:#f0f0f0"></div>
<div class="a" style="left:931px;top:177px;width:7px;height:28px;background:#c8c8c8"></div>
<svg class="a" style="left:932px;top:170px" width="5" height="3" viewBox="0 0 5 3"><path d="M0.5 2.5L2.5 0.5L4.5 2.5" stroke="#555" fill="none" stroke-width="0.8"/></svg>
<svg class="a" style="left:932px;top:214px" width="5" height="3" viewBox="0 0 5 3"><path d="M0.5 0.5L2.5 2.5L4.5 0.5" stroke="#555" fill="none" stroke-width="0.8"/></svg>
<div class="t dt" style="left:811px;top:166px">25x [SC]</div><div class="t dt" style="left:853px;top:166px">2.009799001</div>
<div class="t dt" style="left:811px;top:174px;color:#fff">50x [SC]</div><div class="t dt" style="left:853px;top:174px;color:#fff">1.042299986</div>
<div class="t dt" style="left:811px;top:183px">100x [SC]</div><div class="t dt" style="left:853px;top:183px">0.518999994</div>
<div class="t dt" style="left:811px;top:191px">200x [SC]</div><div class="t dt" style="left:853px;top:191px">0.260399997</div>
<div class="t dt" style="left:811px;top:199px">500x [SC]</div><div class="t dt" style="left:853px;top:199px">0.104330002</div>
<div class="t dt" style="left:811px;top:208px">1000x [SC]</div><div class="t dt" style="left:853px;top:208px">0.051999999</div>
<div class="btn" style="left:948px;top:143px;width:41px;height:13px">OK</div>
<div class="btn" style="left:948px;top:157px;width:41px;height:12px">Cancel</div>
<div class="btn" style="left:948px;top:177px;width:41px;height:13px">Add...</div>
<div class="btn" style="left:948px;top:191px;width:41px;height:12px">Edit...</div>
<div class="btn" style="left:948px;top:205px;width:41px;height:12px">Delete</div>
<div class="btn" style="left:948px;top:225px;width:41px;height:13px">Import...</div>
<div class="btn" style="left:808px;top:225px;width:49px;height:13px">Auto Calibrate...</div>
<div class="t dt" style="left:861px;top:227px">using Clemex Micrometer</div>


<!-- Auto Calibration dialog -->
<div class="a" style="left:801px;top:260px;width:450px;height:225px;box-shadow:1px 2px 4px rgba(0,0,0,0.3)"></div>
<div class="a" style="left:801px;top:260px;width:450px;height:225px;background:#f0f0f0;border:1px solid #9a9a9a"></div>
<div class="a" style="left:802px;top:261px;width:448px;height:16px;background:#fff"></div>
<div class="t" style="left:804px;top:264px;font-size:7px;color:#111">Auto Calibration using Clemex Micrometer</div>
<svg class="a" style="left:1239px;top:266px" width="6" height="6" viewBox="0 0 6 6"><path d="M0 0L6 6M6 0L0 6" stroke="#222" stroke-width="0.8"/></svg>
<div class="a" style="left:806px;top:281px;width:371px;height:152px;background:#fff;border:1px solid #a0a0a0"></div>
<div class="a" style="left:807px;top:306px;width:369px;height:9px;background:#f3f3f3"></div>
<div class="a" style="left:808px;top:323px;width:368px;height:1px;background:#f3f3f3"></div>
<div class="a" style="left:808px;top:332px;width:368px;height:1px;background:#f3f3f3"></div>
<div class="a" style="left:808px;top:341px;width:368px;height:1px;background:#f3f3f3"></div>
<div class="a" style="left:808px;top:350px;width:368px;height:1px;background:#f3f3f3"></div>
<div class="a" style="left:808px;top:359px;width:368px;height:1px;background:#f3f3f3"></div>
<div class="a" style="left:808px;top:368px;width:368px;height:1px;background:#f3f3f3"></div>
<div class="a" style="left:808px;top:377px;width:368px;height:1px;background:#f3f3f3"></div>
<div class="a" style="left:808px;top:386px;width:368px;height:1px;background:#f3f3f3"></div>
<div class="a" style="left:808px;top:395px;width:368px;height:1px;background:#f3f3f3"></div>
<div class="a" style="left:808px;top:404px;width:368px;height:1px;background:#f3f3f3"></div>
<div class="a" style="left:808px;top:413px;width:368px;height:1px;background:#f3f3f3"></div>

<div class="a" style="left:849px;top:283px;width:1px;height:140px;background:#eeeeee"></div>
<div class="a" style="left:890px;top:283px;width:1px;height:140px;background:#eeeeee"></div>
<div class="a" style="left:946px;top:283px;width:1px;height:140px;background:#eeeeee"></div>
<div class="a" style="left:1000px;top:283px;width:1px;height:140px;background:#eeeeee"></div>
<div class="a" style="left:1080px;top:283px;width:1px;height:140px;background:#eeeeee"></div>
<div class="a" style="left:1134px;top:283px;width:1px;height:140px;background:#eeeeee"></div>
<div class="t mo" style="left:811px;top:285px">Mag.</div>
<div class="t mo" style="left:853px;top:285px">Nominal</div>
<div class="t mo" style="left:894px;top:285px">Length(μm)</div>
<div class="t mo" style="left:951px;top:285px">μm/pixel</div>
<div class="t mo" style="left:1004px;top:285px">Uncertainty(μm)</div>
<div class="t mo" style="left:1084px;top:285px">Previous</div>
<div class="t mo" style="left:1137px;top:285px">Delta(μm)</div>
<div class="t mo" style="left:811px;top:297px">25x</div>
<div class="t mo" style="left:811px;top:306px">50x</div>
<div class="t mo" style="left:811px;top:315px">100x</div>
<div class="t mo" style="left:811px;top:324px">200x</div>
<div class="t mo" style="left:811px;top:333px">500x</div>
<div class="t mo" style="left:811px;top:341px">1000x</div>
<div class="t mo" style="left:853px;top:306px">700</div><div class="t mo" style="left:898px;top:306px">655.9</div><div class="t mo" style="left:955px;top:306px">1.0424</div><div class="t mo" style="left:1004px;top:306px">0.00061</div><div class="t mo" style="left:1088px;top:306px">1.0423</div><div class="t mo" style="left:1137px;top:306px">-0.00010</div>

<div class="a" style="left:807px;top:423px;width:369px;height:8px;background:#f0f0f0"></div>
<div class="a" style="left:817px;top:424px;width:263px;height:6px;background:#c8c8c8"></div>
<svg class="a" style="left:810px;top:424px" width="4" height="6" viewBox="0 0 4 6"><path d="M3.5 0.5L0.8 3L3.5 5.5" stroke="#333" fill="none" stroke-width="0.9"/></svg>
<svg class="a" style="left:1169px;top:424px" width="4" height="6" viewBox="0 0 4 6"><path d="M0.5 0.5L3.2 3L0.5 5.5" stroke="#333" fill="none" stroke-width="0.9"/></svg>
<div class="t dt" style="left:807px;top:454px">Status:</div>
<div class="a" style="left:858px;top:454px;width:319px;height:11px;background:#f0f0f0;border-top:1px solid #a0a0a0;border-left:1px solid #a0a0a0;border-bottom:1px solid #fff"></div>
<div class="t dt" style="left:860px;top:455px">Auto Centering Target...</div>
<div class="t dt" style="left:807px;top:470px">Auto Calibration:</div>
<div class="a" style="left:858px;top:471px;width:319px;height:6px;background:#e6e6e6;border:1px solid #cfcfcf"></div>
<div class="a" style="left:859px;top:472px;width:3px;height:4px;background:#06b025"></div>
<div class="t dt" style="left:1184px;top:284px">Serial Number:</div>
<div class="a" style="left:1184px;top:294px;width:60px;height:11px;background:#fff;border:1px solid #8a8a8a"></div>
<div class="t dt" style="left:1186px;top:295px;color:#0a7a1a">CL-4322830</div>
<div class="t dt" style="left:1189px;top:307px">Slide Orientation</div>
<div class="a" style="left:1184px;top:342px;width:60px;height:1px;background:#dadada"></div>
<div class="a" style="left:1193px;top:318px;width:7px;height:7px;border-radius:50%;border:1px solid #333;background:#fff"></div>
<div class="t dt" style="left:1202px;top:317px">Vertical</div>
<div class="a" style="left:1193px;top:330px;width:7px;height:7px;border-radius:50%;border:1px solid #333;background:#fff"></div>
<div class="a" style="left:1195px;top:332px;width:3px;height:3px;border-radius:50%;background:#222"></div>
<div class="t dt" style="left:1202px;top:329px">Horizontal</div>
<div class="a" style="left:1188px;top:363px;width:7px;height:7px;border:1px solid #333;background:#fff"></div>
<div class="t dt" style="left:1198px;top:362px">Auto Exposure</div>
<div class="a" style="left:1188px;top:375px;width:7px;height:7px;border:1px solid #333;background:#fff"></div>
<svg class="a" style="left:1189px;top:376px" width="5" height="5" viewBox="0 0 5 5"><path d="M0.5 2.5L2 4L4.5 0.8" stroke="#111" fill="none" stroke-width="0.9"/></svg>
<div class="t dt" style="left:1198px;top:374px">No autofocus</div>
<div class="btn" style="left:1184px;top:388px;width:60px;height:12px">Calibrate All Mag.</div>
<div class="btn" style="left:1184px;top:402px;width:60px;height:12px;color:#9a9a9a;background:#d2d2d2;border-color:#c4c4c4">Calibrate 50x Mag.</div>
<div class="btn" style="left:1184px;top:417px;width:60px;height:12px;color:#9a9a9a;background:#cdcdcd;border-color:#c4c4c4">Stop</div>
<div class="btn" style="left:1184px;top:431px;width:60px;height:12px">Reset all Mag.</div>
<div class="btn" style="left:1184px;top:450px;width:60px;height:12px">Apply Calibrations</div>
<div class="btn" style="left:1184px;top:466px;width:60px;height:12px">Close</div>

<div class="a" style="left:0;top:716px;width:1280px;height:1px;background:#0c3f7c"></div>
<!-- taskbar -->
<div class="a" style="left:0;top:829px;width:1280px;height:24px;background:#1f2b38"></div>
<div class="a" style="left:28px;top:829px;width:204px;height:24px;background:#f2f2f2"></div>


<!-- desktop icons -->
<div class="a" style="left:12px;top:716px;width:20px;height:11px;background:#f4f4f4"></div>
<div class="a" style="left:14px;top:716px;width:7px;height:3px;background:#3a6ab0"></div>
<div class="t dk" style="left:12px;top:731px">focus</div>
<div class="t dk" style="left:3px;top:740px">parameter...</div>
<svg class="a" style="left:8px;top:767px" width="27" height="19" viewBox="0 0 27 19"><rect width="27" height="19" fill="#ac6a8c"/><rect x="0" y="0" width="2" height="2" fill="#88709a"/><rect x="2" y="0" width="2" height="2" fill="#a86088"/><rect x="4" y="0" width="2" height="2" fill="#aa6c8c"/><rect x="6" y="0" width="2" height="2" fill="#b07888"/><rect x="8" y="0" width="2" height="2" fill="#aa6c8c"/><rect x="10" y="0" width="2" height="2" fill="#aa6c8c"/><rect x="12" y="0" width="2" height="2" fill="#b0688a"/><rect x="14" y="0" width="2" height="2" fill="#a07a88"/><rect x="16" y="0" width="2" height="2" fill="#b06a8c"/><rect x="18" y="0" width="2" height="2" fill="#b46c90"/><rect x="20" y="0" width="2" height="2" fill="#9a6a9a"/><rect x="22" y="0" width="2" height="2" fill="#b0688a"/><rect x="24" y="0" width="2" height="2" fill="#b06a8c"/><rect x="26" y="0" width="2" height="2" fill="#b8708a"/><rect x="0" y="2" width="2" height="2" fill="#a8688e"/><rect x="2" y="2" width="2" height="2" fill="#b07888"/><rect x="4" y="2" width="2" height="2" fill="#b46c90"/><rect x="6" y="2" width="2" height="2" fill="#9a6a9a"/><rect x="8" y="2" width="2" height="2" fill="#8a6a9e"/><rect x="10" y="2" width="2" height="2" fill="#a07a88"/><rect x="12" y="2" width="2" height="2" fill="#a8688e"/><rect x="14" y="2" width="2" height="2" fill="#88709a"/><rect x="16" y="2" width="2" height="2" fill="#9a6a9a"/><rect x="18" y="2" width="2" height="2" fill="#b06a8c"/><rect x="20" y="2" width="2" height="2" fill="#aa6c8c"/><rect x="22" y="2" width="2" height="2" fill="#9a6a9a"/><rect x="24" y="2" width="2" height="2" fill="#8a6a9e"/><rect x="26" y="2" width="2" height="2" fill="#a86088"/><rect x="0" y="4" width="2" height="2" fill="#b8708a"/><rect x="2" y="4" width="2" height="2" fill="#8a6a9e"/><rect x="4" y="4" width="2" height="2" fill="#b8708a"/><rect x="6" y="4" width="2" height="2" fill="#a8688e"/><rect x="8" y="4" width="2" height="2" fill="#b8708a"/><rect x="10" y="4" width="2" height="2" fill="#88709a"/><rect x="12" y="4" width="2" height="2" fill="#88709a"/><rect x="14" y="4" width="2" height="2" fill="#b46c90"/><rect x="16" y="4" width="2" height="2" fill="#b8708a"/><rect x="18" y="4" width="2" height="2" fill="#b8708a"/><rect x="20" y="4" width="2" height="2" fill="#b06a8c"/><rect x="22" y="4" width="2" height="2" fill="#b06a8c"/><rect x="24" y="4" width="2" height="2" fill="#9a6a9a"/><rect x="26" y="4" width="2" height="2" fill="#9a6a9a"/><rect x="0" y="6" width="2" height="2" fill="#b8708a"/><rect x="2" y="6" width="2" height="2" fill="#b8708a"/><rect x="4" y="6" width="2" height="2" fill="#a86088"/><rect x="6" y="6" width="2" height="2" fill="#b07888"/><rect x="8" y="6" width="2" height="2" fill="#9a6a9a"/><rect x="10" y="6" width="2" height="2" fill="#a07a88"/><rect x="12" y="6" width="2" height="2" fill="#b0688a"/><rect x="14" y="6" width="2" height="2" fill="#b0688a"/><rect x="16" y="6" width="2" height="2" fill="#9a6a9a"/><rect x="18" y="6" width="2" height="2" fill="#b8708a"/><rect x="20" y="6" width="2" height="2" fill="#aa6c8c"/><rect x="22" y="6" width="2" height="2" fill="#9a6a9a"/><rect x="24" y="6" width="2" height="2" fill="#8a6a9e"/><rect x="26" y="6" width="2" height="2" fill="#a86088"/><rect x="0" y="8" width="2" height="2" fill="#b06a8c"/><rect x="2" y="8" width="2" height="2" fill="#b07888"/><rect x="4" y="8" width="2" height="2" fill="#8a6a9e"/><rect x="6" y="8" width="2" height="2" fill="#b8708a"/><rect x="8" y="8" width="2" height="2" fill="#b8708a"/><rect x="10" y="8" width="2" height="2" fill="#a86088"/><rect x="12" y="8" width="2" height="2" fill="#a8688e"/><rect x="14" y="8" width="2" height="2" fill="#b07888"/><rect x="16" y="8" width="2" height="2" fill="#a86088"/><rect x="18" y="8" width="2" height="2" fill="#88709a"/><rect x="20" y="8" width="2" height="2" fill="#88709a"/><rect x="22" y="8" width="2" height="2" fill="#b06a8c"/><rect x="24" y="8" width="2" height="2" fill="#88709a"/><rect x="26" y="8" width="2" height="2" fill="#b0688a"/><rect x="0" y="10" width="2" height="2" fill="#aa6c8c"/><rect x="2" y="10" width="2" height="2" fill="#b07888"/><rect x="4" y="10" width="2" height="2" fill="#a8688e"/><rect x="6" y="10" width="2" height="2" fill="#a86088"/><rect x="8" y="10" width="2" height="2" fill="#b07888"/><rect x="10" y="10" width="2" height="2" fill="#a86088"/><rect x="12" y="10" width="2" height="2" fill="#b46c90"/><rect x="14" y="10" width="2" height="2" fill="#aa6c8c"/><rect x="16" y="10" width="2" height="2" fill="#b07888"/><rect x="18" y="10" width="2" height="2" fill="#b8708a"/><rect x="20" y="10" width="2" height="2" fill="#b46c90"/><rect x="22" y="10" width="2" height="2" fill="#b46c90"/><rect x="24" y="10" width="2" height="2" fill="#aa6c8c"/><rect x="26" y="10" width="2" height="2" fill="#b8708a"/><rect x="0" y="12" width="2" height="2" fill="#b06a8c"/><rect x="2" y="12" width="2" height="2" fill="#a86088"/><rect x="4" y="12" width="2" height="2" fill="#b06a8c"/><rect x="6" y="12" width="2" height="2" fill="#aa6c8c"/><rect x="8" y="12" width="2" height="2" fill="#b07888"/><rect x="10" y="12" width="2" height="2" fill="#8a6a9e"/><rect x="12" y="12" width="2" height="2" fill="#b06a8c"/><rect x="14" y="12" width="2" height="2" fill="#a07a88"/><rect x="16" y="12" width="2" height="2" fill="#8a6a9e"/><rect x="18" y="12" width="2" height="2" fill="#b07888"/><rect x="20" y="12" width="2" height="2" fill="#8a6a9e"/><rect x="22" y="12" width="2" height="2" fill="#88709a"/><rect x="24" y="12" width="2" height="2" fill="#b06a8c"/><rect x="26" y="12" width="2" height="2" fill="#b46c90"/><rect x="0" y="14" width="2" height="2" fill="#b06a8c"/><rect x="2" y="14" width="2" height="2" fill="#aa6c8c"/><rect x="4" y="14" width="2" height="2" fill="#b8708a"/><rect x="6" y="14" width="2" height="2" fill="#88709a"/><rect x="8" y="14" width="2" height="2" fill="#9a6a9a"/><rect x="10" y="14" width="2" height="2" fill="#a8688e"/><rect x="12" y="14" width="2" height="2" fill="#9a6a9a"/><rect x="14" y="14" width="2" height="2" fill="#b46c90"/><rect x="16" y="14" width="2" height="2" fill="#b07888"/><rect x="18" y="14" width="2" height="2" fill="#a07a88"/><rect x="20" y="14" width="2" height="2" fill="#b07888"/><rect x="22" y="14" width="2" height="2" fill="#a07a88"/><rect x="24" y="14" width="2" height="2" fill="#a86088"/><rect x="26" y="14" width="2" height="2" fill="#b46c90"/><rect x="0" y="16" width="2" height="2" fill="#a8688e"/><rect x="2" y="16" width="2" height="2" fill="#88709a"/><rect x="4" y="16" width="2" height="2" fill="#aa6c8c"/><rect x="6" y="16" width="2" height="2" fill="#b07888"/><rect x="8" y="16" width="2" height="2" fill="#a86088"/><rect x="10" y="16" width="2" height="2" fill="#b06a8c"/><rect x="12" y="16" width="2" height="2" fill="#8a6a9e"/><rect x="14" y="16" width="2" height="2" fill="#a8688e"/><rect x="16" y="16" width="2" height="2" fill="#9a6a9a"/><rect x="18" y="16" width="2" height="2" fill="#b07888"/><rect x="20" y="16" width="2" height="2" fill="#a07a88"/><rect x="22" y="16" width="2" height="2" fill="#88709a"/><rect x="24" y="16" width="2" height="2" fill="#b07888"/><rect x="26" y="16" width="2" height="2" fill="#b8708a"/><rect x="0" y="18" width="2" height="2" fill="#b07888"/><rect x="2" y="18" width="2" height="2" fill="#a86088"/><rect x="4" y="18" width="2" height="2" fill="#aa6c8c"/><rect x="6" y="18" width="2" height="2" fill="#a07a88"/><rect x="8" y="18" width="2" height="2" fill="#a8688e"/><rect x="10" y="18" width="2" height="2" fill="#a86088"/><rect x="12" y="18" width="2" height="2" fill="#b0688a"/><rect x="14" y="18" width="2" height="2" fill="#b07888"/><rect x="16" y="18" width="2" height="2" fill="#a86088"/><rect x="18" y="18" width="2" height="2" fill="#b8708a"/><rect x="20" y="18" width="2" height="2" fill="#a8688e"/><rect x="22" y="18" width="2" height="2" fill="#b0688a"/><rect x="24" y="18" width="2" height="2" fill="#b8708a"/><rect x="26" y="18" width="2" height="2" fill="#aa6c8c"/></svg>
<div class="t dk" style="left:5px;top:789px">mosaic alu</div>
<div class="t dk" style="left:4px;top:798px">polarized.tif</div>
<svg class="a" style="left:52px;top:761px" width="28" height="25" viewBox="0 0 28 25"><path d="M7 2Q1 12.5 7 23" stroke="#2a6ab8" stroke-width="4" fill="none" opacity="0.6"/><path d="M21 2Q27 12.5 21 23" stroke="#2a6ab8" stroke-width="4" fill="none" opacity="0.6"/><path d="M7 2Q1 12.5 7 23" stroke="#111" stroke-width="2.4" fill="none"/><path d="M21 2Q27 12.5 21 23" stroke="#111" stroke-width="2.4" fill="none"/><ellipse cx="14" cy="12.5" rx="5.5" ry="7.5" fill="#1a5aa8"/><ellipse cx="14" cy="12.5" rx="4.5" ry="6.5" fill="none" stroke="#22e03a" stroke-width="3" stroke-dasharray="4 0.6"/></svg>
<div class="t dk" style="left:47px;top:789px">AFMonitor...</div>
<svg class="a" style="left:276px;top:716px" width="25" height="11" viewBox="0 0 25 11"><path d="M3 0Q5 6 8 10" stroke="#111" stroke-width="2.4" fill="none"/><path d="M22 0Q21 7 17 10" stroke="#111" stroke-width="2.4" fill="none"/><path d="M8 0Q10 6 13 6Q16 6 17 0" stroke="#22dd22" stroke-width="3" fill="none"/></svg>
<div class="a" style="left:274px;top:721px;width:8px;height:8px;background:#fff"></div>
<svg class="a" style="left:275px;top:722px" width="6" height="6" viewBox="0 0 6 6"><path d="M1 5L5 1M2.5 1H5V3.5" stroke="#1a50a0" stroke-width="1.2" fill="none"/></svg>
<div class="t dk" style="left:269px;top:731px">AFMonitor -</div>
<div class="t dk" style="left:275px;top:740px">Shortcut</div>
<!-- taskbar icons -->
<svg class="a" style="left:9px;top:836px" width="10" height="10" viewBox="0 0 10 10"><path d="M0 1.4L4.2 0.8V4.7H0ZM4.8 0.7L10 0V4.7H4.8ZM0 5.3H4.2V9.2L0 8.6ZM4.8 5.3H10V10L4.8 9.3Z" fill="#fff"/></svg>
<svg class="a" style="left:36px;top:836px" width="10" height="10" viewBox="0 0 10 10"><circle cx="6" cy="4" r="3.2" fill="none" stroke="#222" stroke-width="1"/><path d="M3.8 6.2L0.8 9.2" stroke="#222" stroke-width="1.2"/></svg>
<div class="t" style="left:52px;top:836px;font-size:8.5px;color:#222;line-height:10px">Type here to search</div>
<div class="a" style="left:242px;top:836px;width:9px;height:9px;border-radius:50%;border:1.6px solid #fff"></div>
<svg class="a" style="left:268px;top:835px" width="12" height="11" viewBox="0 0 12 11"><rect x="0.5" y="2.5" width="8" height="6" fill="none" stroke="#fff"/><path d="M0 0.5H9M0 10.5H9M11 0V11" stroke="#fff"/></svg>
<svg class="a" style="left:298px;top:834px" width="14" height="14" viewBox="0 0 14 14"><path d="M12.5 9.5H4.5Q5 12 8 12Q10.5 12 12 11V13Q10 14 7.5 14Q1.5 14 1.5 7.5Q1.5 1.5 7.5 1Q13 1 12.5 8V9.5ZM4.5 7H9.5Q9 4 7 4Q5 4 4.5 7Z" fill="#1e90ff"/></svg>
<div class="a" style="left:293px;top:851px;width:24px;height:2px;background:#7fb4e6"></div>
<svg class="a" style="left:328px;top:834px" width="14" height="13" viewBox="0 0 14 13"><rect x="0" y="2" width="14" height="11" fill="#f4c430"/><rect x="0" y="0" width="6" height="3" fill="#e8b020"/><rect x="3" y="7" width="8" height="4" fill="#3a9ae0"/></svg>
<svg class="a" style="left:356px;top:833px" width="14" height="15" viewBox="0 0 14 15"><rect x="0" y="4" width="14" height="11" fill="#fff"/><path d="M4 4V2Q7 -1 10 2V4" stroke="#fff" fill="none"/><rect x="3" y="7" width="3.5" height="3" fill="#f25022"/><rect x="7.5" y="7" width="3.5" height="3" fill="#7fba00"/><rect x="3" y="11" width="3.5" height="3" fill="#00a4ef"/><rect x="7.5" y="11" width="3.5" height="3" fill="#ffb900"/></svg>
<svg class="a" style="left:385px;top:835px" width="16" height="12" viewBox="0 0 16 12"><rect x="0" y="0" width="16" height="12" fill="#2a8ae0"/><path d="M0 0L8 7L16 0" stroke="#cfe6fb" stroke-width="1.2" fill="none"/></svg>
<svg class="a" style="left:415px;top:834px" width="14" height="14" viewBox="0 0 14 14"><circle cx="7" cy="7" r="7" fill="#db4437"/><path d="M7 7L13 3.5A7 7 0 0 1 9 13.7Z" fill="#f4c20d"/><path d="M7 7L9 13.7A7 7 0 0 1 1 3.5Z" fill="#0f9d58"/><circle cx="7" cy="7" r="3" fill="#fff"/><circle cx="7" cy="7" r="2.2" fill="#4285f4"/></svg>
<svg class="a" style="left:443px;top:834px" width="14" height="14" viewBox="0 0 14 14"><rect x="4" y="0" width="10" height="14" fill="#41a5ee"/><rect x="0" y="3" width="9" height="9" fill="#185abd"/><path d="M1.5 5L2.8 10L4.5 6.5L6.2 10L7.5 5" stroke="#fff" stroke-width="0.9" fill="none"/></svg>
<svg class="a" style="left:472px;top:834px" width="14" height="14" viewBox="0 0 14 14"><rect x="4" y="0" width="10" height="14" fill="#21a366"/><rect x="0" y="3" width="9" height="9" fill="#107c41"/><path d="M2 5L7 10M7 5L2 10" stroke="#fff" stroke-width="1.1"/></svg>
<svg class="a" style="left:501px;top:834px" width="16" height="14" viewBox="0 0 16 14"><ellipse cx="8" cy="6" rx="7" ry="4" fill="#e8e8e8" transform="rotate(-20 8 6)"/><path d="M2 8L14 4" stroke="#d03030" stroke-width="1.5"/><path d="M9 9L13 13M11 9V13" stroke="#2a6ad0" stroke-width="1.8"/></svg>
<div class="a" style="left:524px;top:829px;width:27px;height:24px;background:#4a535e"></div>
<svg class="a" style="left:531px;top:834px" width="14" height="14" viewBox="0 0 14 14"><rect width="14" height="14" fill="#3ab54a"/><circle cx="4.5" cy="5" r="1.8" fill="#fff"/><circle cx="9.5" cy="4" r="1.8" fill="#fff"/><circle cx="6" cy="10" r="1.8" fill="#fff"/></svg>
<div class="a" style="left:524px;top:851px;width:27px;height:2px;background:#7fb4e6"></div>
<svg class="a" style="left:559px;top:834px" width="15" height="14" viewBox="0 0 15 14"><rect width="15" height="14" fill="#e8302a"/><path d="M2 5H9M5 8H13M2 11H10" stroke="#fff" stroke-width="1.2"/></svg>
<svg class="a" style="left:590px;top:833px" width="11" height="15" viewBox="0 0 11 15"><rect x="0" y="0" width="11" height="15" fill="#fff"/><rect x="1.5" y="1.5" width="8" height="3" fill="#333"/><g fill="#333"><rect x="1.5" y="6" width="2" height="2"/><rect x="4.5" y="6" width="2" height="2"/><rect x="7.5" y="6" width="2" height="2"/><rect x="1.5" y="9" width="2" height="2"/><rect x="4.5" y="9" width="2" height="2"/><rect x="7.5" y="9" width="2" height="2"/><rect x="1.5" y="12" width="2" height="2"/><rect x="4.5" y="12" width="2" height="2"/><rect x="7.5" y="12" width="2" height="2"/></g></svg>
<svg class="a" style="left:617px;top:834px" width="14" height="14" viewBox="0 0 14 14"><rect width="14" height="14" rx="2" fill="#0e8ee9"/><ellipse cx="7" cy="7" rx="5" ry="4" fill="#fff"/><path d="M2.5 7L5 5.5V8.5ZM11.5 7L9 5.5V8.5Z" fill="#0e8ee9"/><rect x="5" y="6.5" width="4" height="1" fill="#0e8ee9"/></svg>
<svg class="a" style="left:647px;top:834px" width="12" height="14" viewBox="0 0 12 14"><rect width="12" height="14" fill="#111"/><ellipse cx="6" cy="7" rx="3" ry="4.5" fill="none" stroke="#22dd22" stroke-width="2"/></svg>
<div class="a" style="left:641px;top:851px;width:25px;height:2px;background:#7fb4e6"></div>

</body></html>
